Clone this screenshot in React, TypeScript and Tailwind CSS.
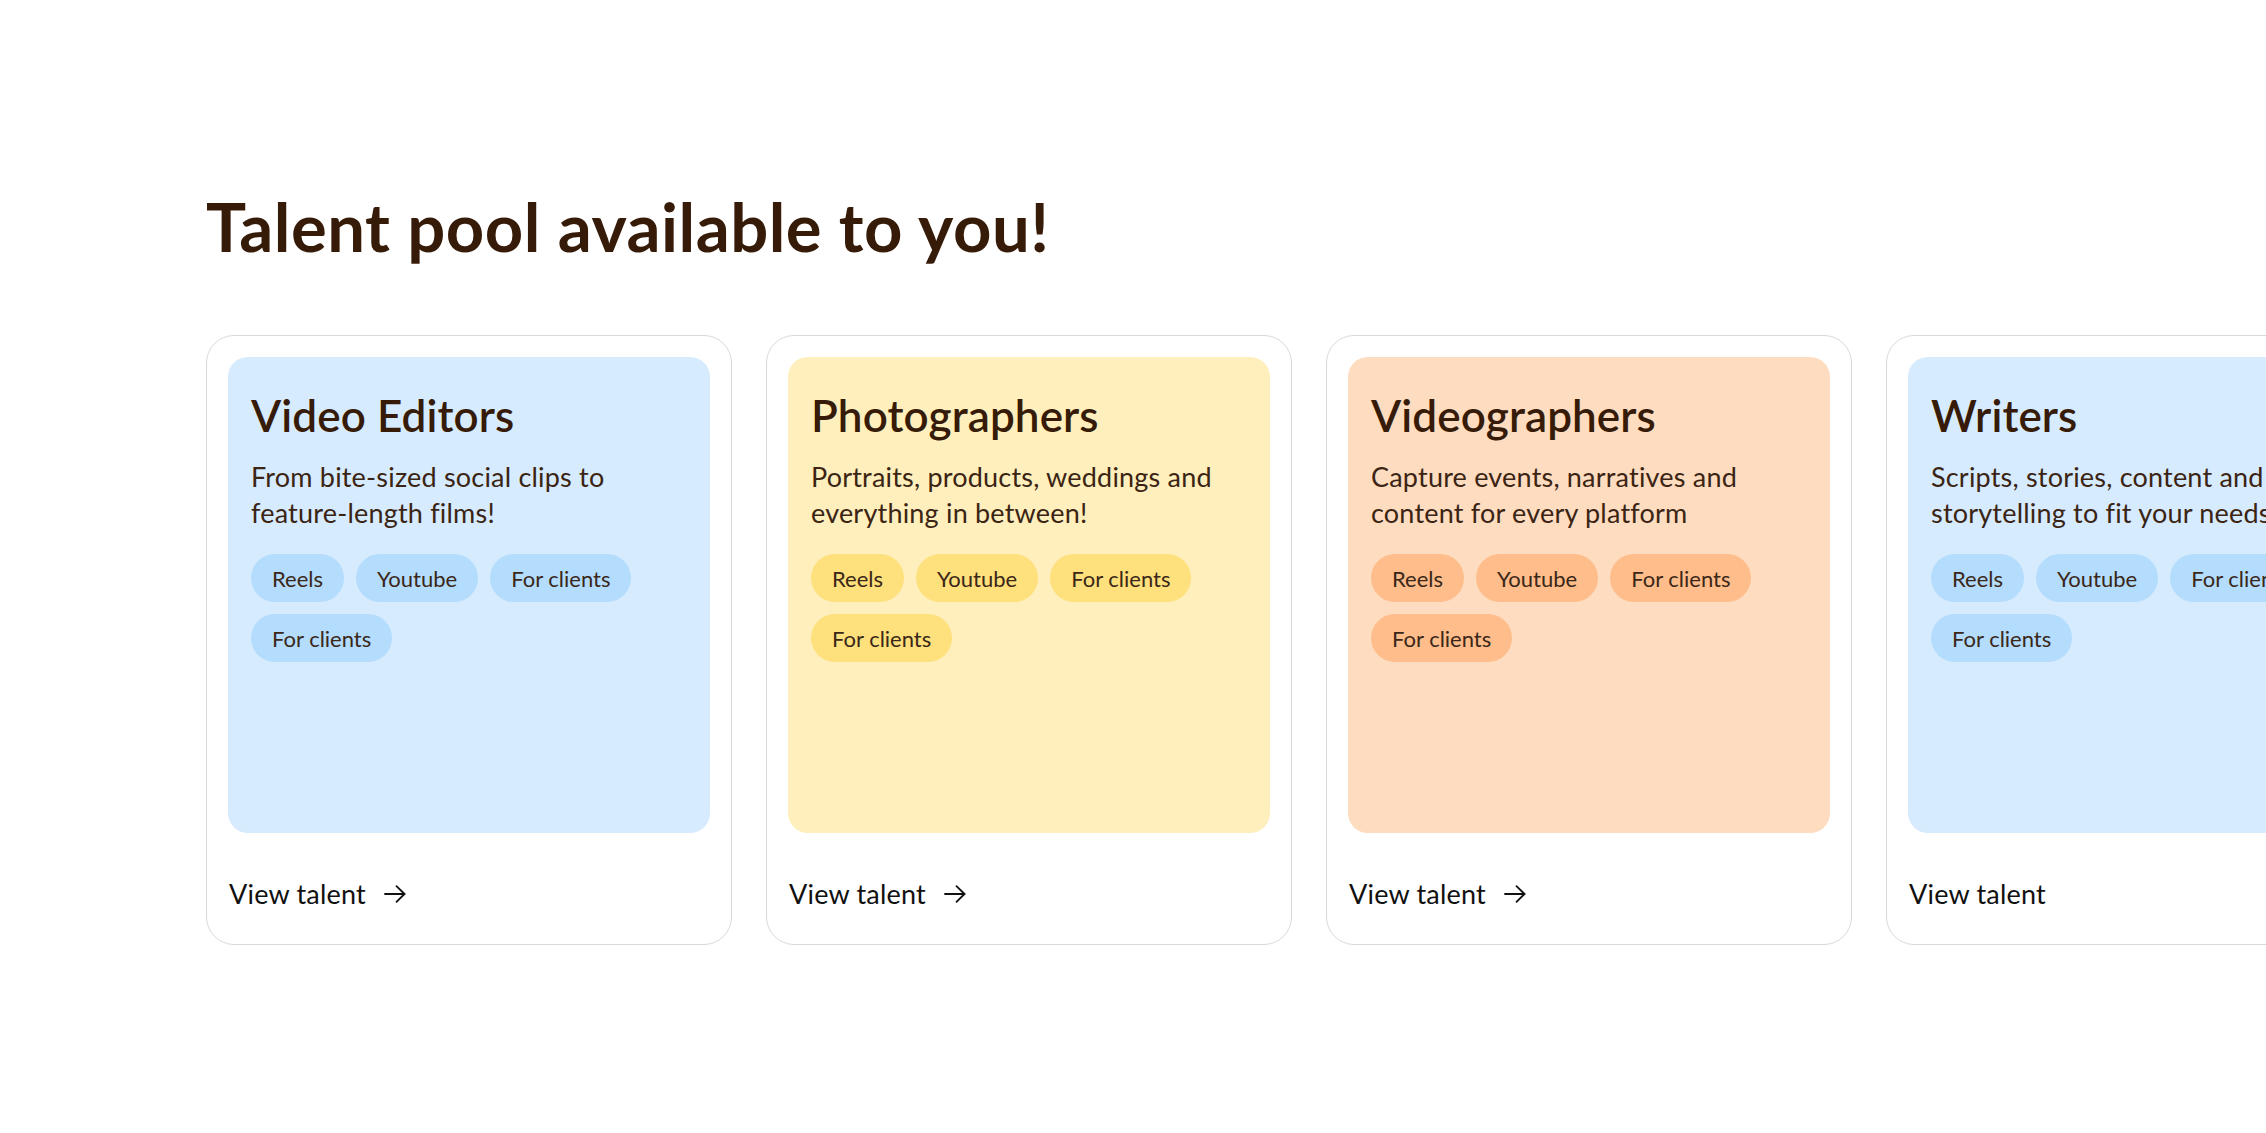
import React from "react";

type Card = {
  title: string;
  line1: string;
  line2: string;
  panel: string;
  tag: string;
  arrow: boolean;
};

const cards: Card[] = [
  {
    title: "Video Editors",
    line1: "From bite-sized social clips to",
    line2: "feature-length films!",
    panel: "bg-[#d6ebfe]",
    tag: "bg-[#b3dcfd]",
    arrow: true,
  },
  {
    title: "Photographers",
    line1: "Portraits, products, weddings and",
    line2: "everything in between!",
    panel: "bg-[#feefbc]",
    tag: "bg-[#fee07c]",
    arrow: true,
  },
  {
    title: "Videographers",
    line1: "Capture events, narratives and",
    line2: "content for every platform",
    panel: "bg-[#fedcc0]",
    tag: "bg-[#febd8a]",
    arrow: true,
  },
  {
    title: "Writers",
    line1: "Scripts, stories, content and",
    line2: "storytelling to fit your needs",
    panel: "bg-[#d6ebfe]",
    tag: "bg-[#b3dcfd]",
    arrow: false,
  },
];

const tags = ["Reels", "Youtube", "For clients", "For clients"];

function Arrow() {
  return (
    <svg width="22" height="18" viewBox="0 0 22 18" fill="none" className="shrink-0">
      <path d="M1 9H20.5" stroke="#111111" strokeWidth="1.8" strokeLinecap="round" />
      <path d="M12.5 1.2L20.5 9L12.5 16.8" stroke="#111111" strokeWidth="1.8" strokeLinecap="round" strokeLinejoin="round" />
    </svg>
  );
}

function TalentCard({ card }: { card: Card }) {
  return (
    <div className="w-[526px] shrink-0 rounded-[28px] border border-[#d9d9d9] bg-white px-[21px] pt-[21px] pb-[34px]">
      <div className={`h-[476px] rounded-[20px] ${card.panel} px-[23px] pt-[32px]`}>
        <h3 className="text-[44px] font-semibold leading-[1.2] text-[#361b08] tracking-[0.1px]">
          {card.title}
        </h3>
        <p className="mt-[17px] text-[27px] leading-[36px] text-[#3b2413] tracking-[0.2px] whitespace-nowrap">
          {card.line1}
          <br />
          {card.line2}
        </p>
        <div className="mt-[23px] flex flex-wrap gap-x-[12px] gap-y-[12px] w-[420px]">
          {tags.map((t, i) => (
            <span
              key={i}
              className={`flex h-[48px] items-center rounded-full px-[21px] text-[22px] text-[#3a2718] ${card.tag}`}
            >
              {t}
            </span>
          ))}
        </div>
      </div>
      <div className="mt-[45px] flex items-center gap-[18px] pl-[1px]">
        <span className="text-[27px] leading-[32px] text-[#111111] tracking-[0.2px]">View talent</span>
        {card.arrow && <Arrow />}
      </div>
    </div>
  );
}

export default function App() {
  return (
    <div className="min-h-[1133px] w-full overflow-hidden bg-white font-['Lato',sans-serif]">
      <div className="pl-[206px] pt-[186px]">
        <h1 className="text-[67px] font-bold leading-[1.2] text-[#361b08] tracking-[0.5px]">
          Talent pool available to you!
        </h1>
        <div className="mt-[69px] flex gap-[34px]">
          {cards.map((c) => (
            <TalentCard key={c.title} card={c} />
          ))}
        </div>
      </div>
    </div>
  );
}
